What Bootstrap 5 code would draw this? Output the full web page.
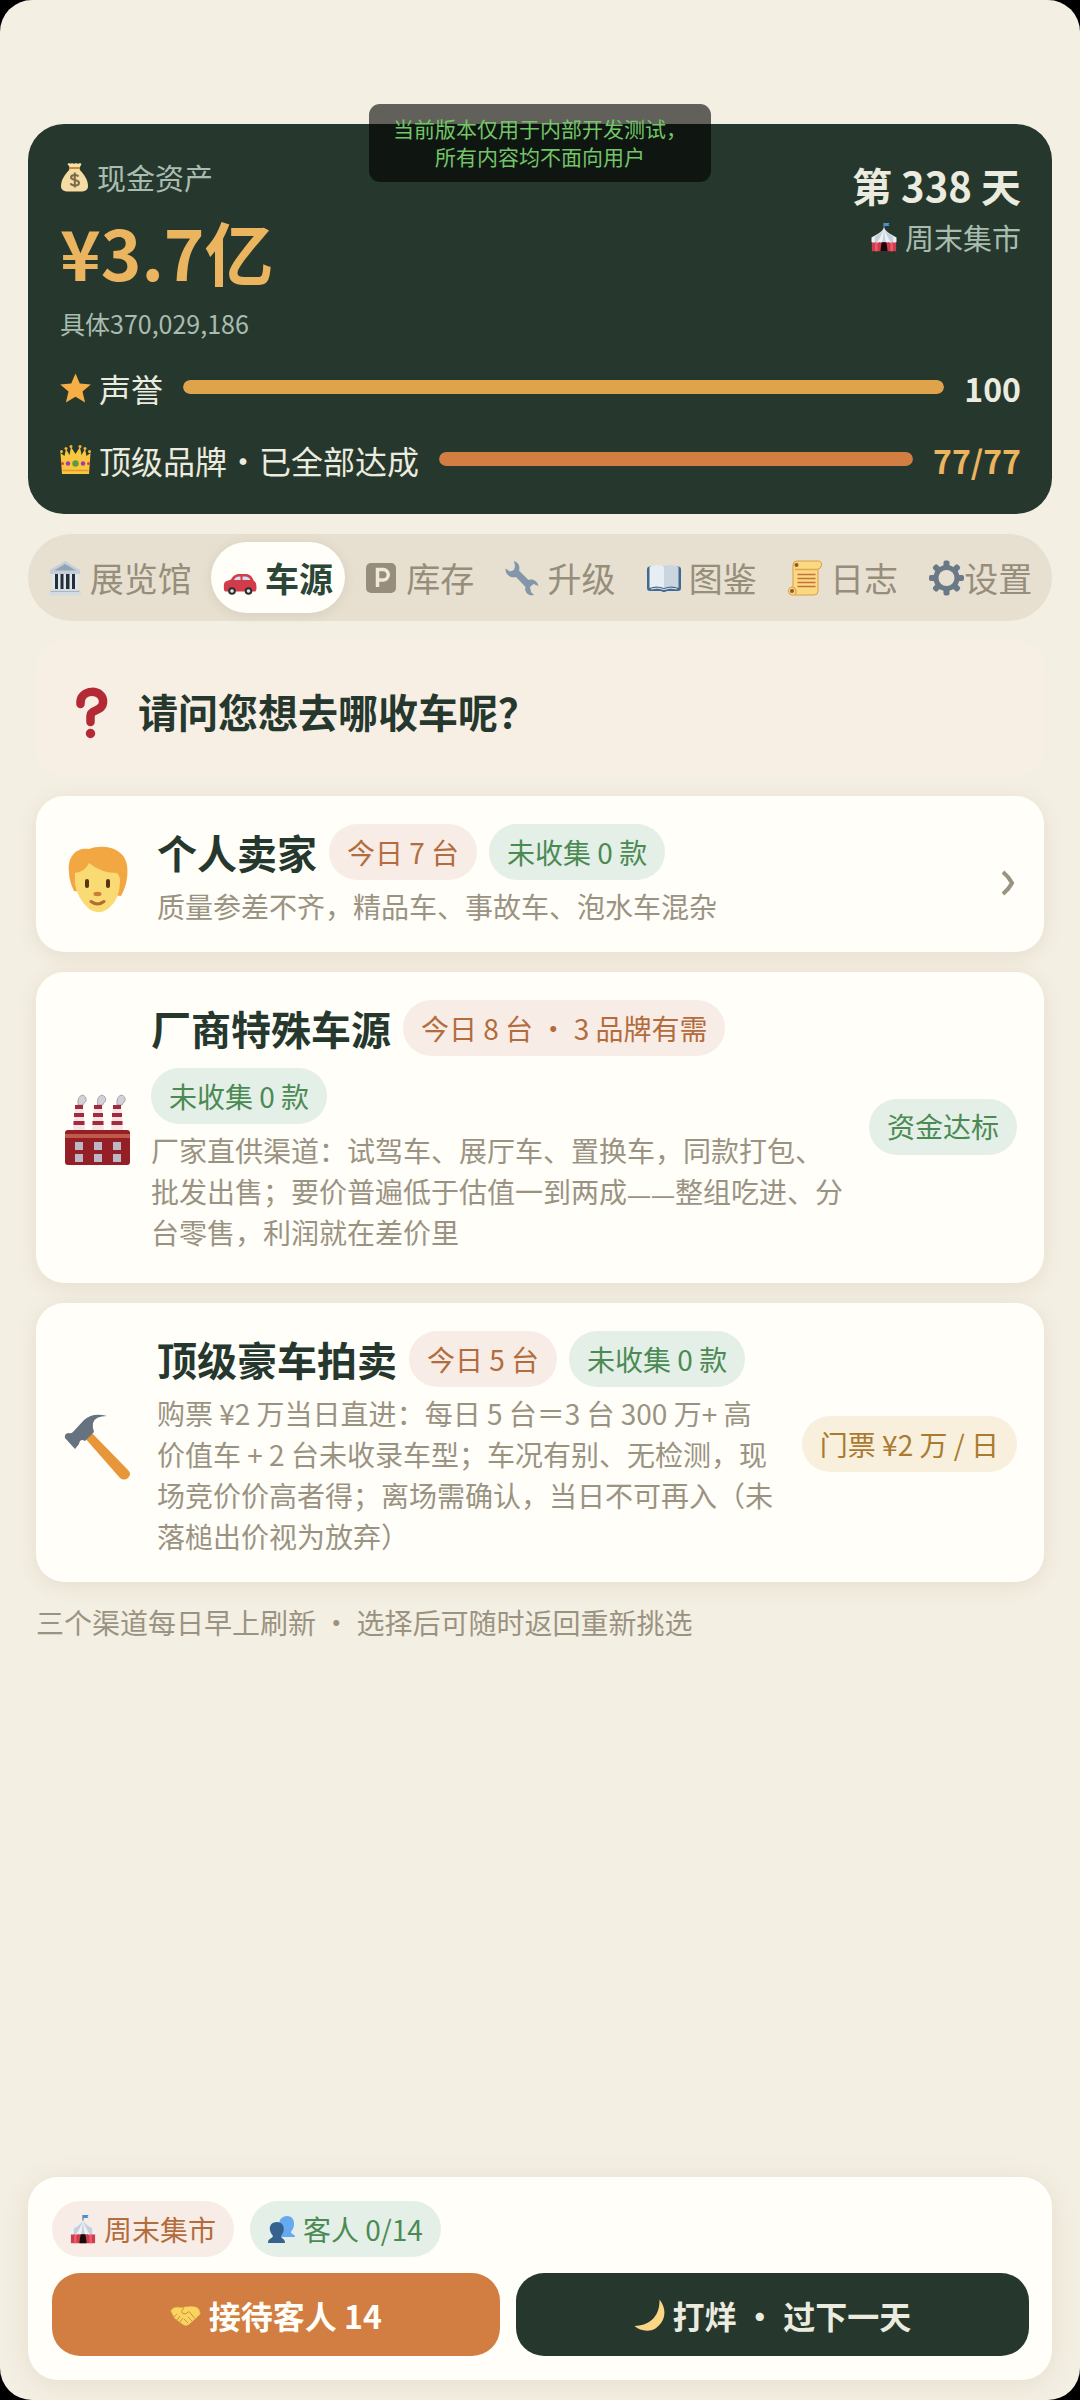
<!DOCTYPE html>
<html lang="zh-CN">
<head>
<meta charset="utf-8">
<meta name="viewport" content="width=device-width, initial-scale=1">
<title>车源</title>
<link href="https://cdn.jsdelivr.net/npm/bootstrap@5.3.0/dist/css/bootstrap.min.css" rel="stylesheet">
<style>
:root{--ink:#26382e;--cream:#f4efe3;--paper:#fffef9;--mute:#9b9382;--gold:#ebb45e;--orange:#d27e43}
body{background:#000;color:var(--ink);font-family:"Noto Sans CJK SC",sans-serif;font-size:28px;line-height:41px}
svg{display:block;flex:none}
.app-screen{background:var(--cream);border-radius:32px;padding:124px 28px 20px;overflow:hidden}
.dev-toast{top:104px;left:50%;transform:translateX(-50%);background:rgba(0,0,0,.6);color:#73c568;border-radius:11px;padding:10px 24px 12px;font-size:21px;line-height:28px;white-space:nowrap;z-index:5}
.summary{background:var(--ink);border-radius:36px;padding:31px 31px 30px 32px;color:#ecebdf}
.soft{color:#a9bcb0;font-size:29px;line-height:44px}
.cash{color:var(--gold);font-size:69px;line-height:88px;font-weight:700;margin-top:8px}
.cash-exact{color:#a9bcb0;font-size:25px;line-height:40px;margin-top:8px}
.day-no{font-size:40px;line-height:60px;font-weight:700}
.stat-row{font-size:32px;line-height:48px;gap:20px}
.stat-first{margin-top:21px}
.stat-row .progress{height:14px;border-radius:7px;background:#3a4b41;margin-top:-2px}
.stat-row .progress-bar{border-radius:7px}
.bar-gold{background:#dfa34c}.bar-orange{background:var(--orange)}
.text-gold{color:var(--gold)}
.tab-strip{background:#e7e0d0;border-radius:44px;padding:8px;gap:8px;margin-top:20px}
.tab-strip .nav-item{flex:1 1 auto}
.tab-strip .nav-link{width:100%;height:71px;padding:0;border-radius:36px;color:#968e7b;font-size:34px;line-height:50px;display:flex;align-items:center;justify-content:center;gap:8px}
.tab-strip .nav-link.active{background:var(--paper);color:#2b4637;font-weight:700;box-shadow:0 2px 12px rgba(60,50,20,.1)}
.tab-strip .tight{gap:0}
.channels{padding:0 8px;margin-top:20px}
.ask{background:#f7eee4;border-radius:28px;padding:40px 26px 35px;font-size:40px;line-height:60px;font-weight:700;gap:16px}
.channel{background:var(--paper);border:0;border-radius:28px;margin-top:20px;padding:28px 27px 25px 28px;gap:24px;box-shadow:0 4px 20px rgba(110,80,40,.1);color:inherit;text-decoration:none}
.channel:hover{color:inherit}
.channel.tall{padding-bottom:30px}
.channel .lead-in{gap:26px}
.channel.tall .lead-in{gap:20px}
.ch-title{font-size:40px;line-height:56px;font-weight:700;margin:0}
.heads{gap:12px}
.desc{color:var(--mute);margin:6px 0 0}
.dash{font-family:"Noto Sans",sans-serif;font-size:24px;line-height:28px}
.chip{display:inline-flex;align-items:center;border-radius:28px;height:56px;padding:0 18px;white-space:nowrap;font-size:28px;gap:8px}
.chip-o{background:#f8ede6;color:#b36c3d}
.chip-g{background:#e4efe7;color:#4c8a54}
.chip-y{background:#f8efdd;color:#aa7a30}
.note{color:var(--mute);margin:20px 0 0}
.dock{background:var(--paper);border-radius:30px;padding:24px 23px 24px 24px;box-shadow:0 4px 28px rgba(110,80,40,.1)}
.dock .btn{flex:1 1 auto;height:83px;border:0;border-radius:28px;font-size:32px;font-weight:700;line-height:48px;display:flex;align-items:center;justify-content:center;gap:8px;padding:0 12px}
.btn-serve,.btn-serve:hover{background:var(--orange);color:#fffef9}
.btn-close-day,.btn-close-day:hover{background:var(--ink);color:#ecebdf}
</style>
</head>
<body>
<svg width="0" height="0" class="position-absolute" aria-hidden="true">
  <symbol id="tent" viewBox="0 0 32 36">
    <path d="M16 0v9" stroke="#6b7f92" stroke-width="1.6"/><path d="M16 0h7l-1.5 1.8L23 3.6h-7z" fill="#4a8fd6"/>
    <path d="M1 23h30v12H1z" fill="#d23b4b"/><path d="M5 23h3v12H5zM24 23h3v12h-3z" fill="#e2606d"/>
    <path d="M16 6C13 12 6 15 .5 18v5.500q2.500 1.500 5 0 2.500 1.500 5 0 2.500 1.500 5.500 0 3 1.500 5.500 0 2.500 1.500 5 0 2.500 1.500 5 0V18C26 15 19 12 16 6z" fill="#eef2f6"/>
    <path d="M16 6c-3 6-7 9-11.500 10.500v7h3.500c3-5 6-10 8-17.500zM16 6c3 6 7 9 11.500 10.500v7H24c-3-5-6-10-8-17.500zM16 8l-2 15.500h4z" fill="#c6d0db"/>
    <path d="M11.500 35l1.500-11h6l1.500 11z" fill="#160a0d"/>
  </symbol>
</svg>

<main class="app-screen position-relative min-vh-100 d-flex flex-column">
  <div class="dev-toast position-absolute text-center" role="status">当前版本仅用于内部开发测试，<br>所有内容均不面向用户</div>

  <header class="summary">
    <div class="d-flex justify-content-between">
      <div>
        <div class="soft d-flex align-items-center gap-2">
          <svg width="29" height="30" viewBox="0 0 29 30"><path d="M9 1q2 1 3 0 2 1.500 4 0 2 1.500 4 0l1.500 1-2.500 5h-8L7.500 2z" fill="#f7dfae"/><path d="M9 5h11v3H9z" fill="#c98a3c"/><path d="M10 7h9c5 5 9 11 9 17 0 4-3 5.500-7 5.500H8C4 29.500 1 28 1 24 1 18 5 12 10 7z" fill="#f4dca4"/><path d="M18.500 14.500c-1-2-7-2.500-7.500.800 0 3.600 8 1.800 8 5.600 0 3.400-7.200 3.200-8.500.500M14.800 10.500v15" fill="none" stroke="#7a6a45" stroke-width="2"/></svg>
          <span>现金资产</span>
        </div>
        <div class="cash">¥3.7亿</div>
        <div class="cash-exact">具体370,029,186</div>
      </div>
      <div class="text-end">
        <div class="day-no">第 338 天</div>
        <div class="soft d-flex align-items-center justify-content-end gap-2"><svg width="26" height="29"><use href="#tent"/></svg><span>周末集市</span></div>
      </div>
    </div>
    <div class="stat-row stat-first d-flex align-items-center">
      <div class="d-flex align-items-center gap-2">
        <svg width="31" height="30" viewBox="0 0 31 30"><path d="M15.500 0.500l4.300 10 11 .900-8.300 7.200 2.600 10.900-9.600-5.800-9.600 5.800 2.600-10.900L.200 11.400l11-.900z" fill="#f6ae45"/></svg>
        <span id="l-rep">声誉</span>
      </div>
      <div class="progress flex-grow-1" role="progressbar" aria-labelledby="l-rep" aria-valuenow="100" aria-valuemin="0" aria-valuemax="100"><div class="progress-bar bar-gold" style="width:100%"></div></div>
      <strong>100</strong>
    </div>
    <div class="stat-row d-flex align-items-center mt-4">
      <div class="d-flex align-items-center gap-2">
        <svg width="31" height="30" viewBox="0 0 31 30"><path d="M2 29L.500 8l4 3 1.500-7 3.500 6L11 2l4.500 7L20 2l1.500 8L25 4l1.500 7 4-3L29 29z" fill="#fac63f"/><g fill="#f7b53a"><circle cx="1.500" cy="6.500" r="1.500"/><circle cx="6" cy="3.500" r="1.500"/><circle cx="11" cy="1.500" r="1.500"/><circle cx="20" cy="1.500" r="1.500"/><circle cx="25" cy="3.500" r="1.500"/><circle cx="29.500" cy="6.500" r="1.500"/></g><circle cx="15.500" cy="18.500" r="3.200" fill="#5f9a3c"/><circle cx="8" cy="18.500" r="2.200" fill="#9b3bb5"/><circle cx="23" cy="18.500" r="2.200" fill="#9b3bb5"/><circle cx="2.500" cy="18.500" r="1.500" fill="#d8433a"/><circle cx="28.500" cy="18.500" r="1.500" fill="#d8433a"/><path d="M2.500 25.500h26" stroke="#e09a28" stroke-width="1.500"/></svg>
        <span id="l-brand">顶级品牌・已全部达成</span>
      </div>
      <div class="progress flex-grow-1" role="progressbar" aria-labelledby="l-brand" aria-valuenow="77" aria-valuemin="0" aria-valuemax="77"><div class="progress-bar bar-orange" style="width:100%"></div></div>
      <strong class="text-gold">77/77</strong>
    </div>
  </header>

  <nav aria-label="主导航">
    <ul class="nav nav-pills flex-nowrap tab-strip">
      <li class="nav-item"><button type="button" class="nav-link">
        <svg width="34" height="36" viewBox="0 0 34 36"><path d="M17 1L2 10v4h30v-4z" fill="#c3ced9"/><path d="M17 4L6 10.500h22z" fill="#93a3b3"/><path d="M4 14h26v15H4z" fill="#dfe6ec"/><path d="M7 14h3v15H7zM12.500 14h3v15h-3zM18 14h3.500v15H18zM24 14h3v15h-3z" fill="#252f3a"/><path d="M2.500 29h29v3h-29zM1 32h32v3.500H1z" fill="#d3dbe3"/><path d="M2.500 31.500h29" stroke="#a9b6c2"/></svg>展览馆</button></li>
      <li class="nav-item"><button type="button" class="nav-link active" aria-current="page">
        <svg width="34" height="36" viewBox="0 0 34 36"><path d="M1 30c-.500-5 0-7.500 1.500-8.500l5.500-2c2-4 5-5.500 9-5.500h5c5 0 7 2.500 9 7 2 1 2.500 3 2.500 8l-1 2.500H2z" fill="#d13b4a"/><path d="M11 20c1.500-3 3-3.500 6.500-3.500V20zM19.500 16.500H22c3 0 4.500 1.500 5.500 3.500h-8z" fill="#cfe0ee"/><circle cx="9" cy="31" r="3.800" fill="#28302f"/><circle cx="25.500" cy="31" r="3.800" fill="#28302f"/><circle cx="9" cy="31" r="1.800" fill="#e3e7ea"/><circle cx="25.500" cy="31" r="1.800" fill="#e3e7ea"/></svg>车源</button></li>
      <li class="nav-item"><button type="button" class="nav-link">
        <svg width="34" height="36" viewBox="0 0 34 36"><rect x="2" y="3" width="30" height="30" rx="5" fill="#968e7b"/><path d="M13.500 27V9.500h5.500a5 5 0 0 1 0 10.500h-5.500" fill="none" stroke="#efe9dc" stroke-width="3.500"/></svg>库存</button></li>
      <li class="nav-item"><button type="button" class="nav-link">
        <svg width="34" height="36" viewBox="0 0 34 36"><path d="M9 1c4 1 6.500 5 5 9.500L23.500 20c4.500-1.500 9 1 10 6l-5-2-3.500 3 1 5 3 3c-5 1.500-10-2.500-8.500-8L11 17C6 18.500 0 15 .500 8.500l4.500 3 4-1.500 1-4z" fill="#8497aa"/></svg>升级</button></li>
      <li class="nav-item"><button type="button" class="nav-link">
        <svg width="34" height="36" viewBox="0 0 34 36"><path d="M3 6.500h28q3 0 3 3V28q0 3-3 3H20q-3 2-6 0H3q-3 0-3-3V9.500q0-3 3-3z" fill="#41688f"/><path d="M2.500 7q7-3.500 14.500-.500v21.500q-7.500-3-14.500 0z" fill="#e6edf3"/><path d="M31.500 7Q24.500 3.500 17 6.500V28q7.500-3 14.500 0z" fill="#cad5df"/><path d="M4 29q7-2 13 .500 6-2.500 13-.500" fill="none" stroke="#dfe8f0" stroke-width="1"/></svg>图鉴</button></li>
      <li class="nav-item"><button type="button" class="nav-link">
        <svg width="34" height="36" viewBox="0 0 34 36"><path d="M9 1h21q4 0 3.500 4-.500 4-3.500 4v22q0 4-4 4H4q-3.500 0-3.500-4T5 27V5q0-4 4-4z" fill="#fbd983" stroke="#d7a047"/><path d="M7 9.500h23M5 27.500q4 1 2.500 7" fill="none" stroke="#e1a84e" stroke-width="1.500"/><circle cx="8.500" cy="5" r="2" fill="#8a5a2a"/><circle cx="4" cy="31" r="2" fill="#8a5a2a"/><path d="M9.500 14.500h18M9.500 18.500h18M9.500 22.500h18M9.500 26.500h18" stroke="#c2723a" stroke-width="1.700"/></svg>日志</button></li>
      <li class="nav-item"><button type="button" class="nav-link tight">
        <svg width="35" height="36" viewBox="-17.500 -18 35 36"><g fill="#697985"><rect x="-3" y="-17.500" width="6" height="35" rx="2"/><rect x="-3" y="-17.500" width="6" height="35" rx="2" transform="rotate(45)"/><rect x="-3" y="-17.500" width="6" height="35" rx="2" transform="rotate(90)"/><rect x="-3" y="-17.500" width="6" height="35" rx="2" transform="rotate(135)"/><circle r="13"/></g><circle r="8" fill="#e7e0d0"/></svg>设置</button></li>
    </ul>
  </nav>

  <section class="channels">
    <div class="ask d-flex align-items-center">
      <svg width="60" height="56" viewBox="0 -4 60 56"><path d="M18.500 17C17 1 42.500 1 41 16c-1 9-12.500 6-12.500 13v6" fill="none" stroke="#b32a35" stroke-width="8.500" stroke-linecap="round"/><circle cx="28.500" cy="46.500" r="4.700" fill="#b32a35"/></svg>
      <span>请问您想去哪收车呢？</span>
    </div>

    <a href="#personal" class="channel d-flex flex-row align-items-center">
      <div class="lead-in d-flex align-items-center flex-grow-1">
        <svg width="67" height="74" viewBox="0 -6 67 74"><path d="M5 27C3 10 14 2 25 4 38-1 60 2 63 20c2 14-3 26-6 31L10 46Q5 36 5 27z" fill="#f3a743"/><path d="M11 28q10-1 14-10 12 10 28 10 3 3 3 8 0 18-11 27-10 8-20 1Q13 53 11 39z" fill="#fadb73"/><path d="M45 23q6 1 8 6l-1-6z" fill="#f3a743"/><rect x="21" y="34" width="4" height="9" rx="2" fill="#5b3115"/><rect x="42" y="34" width="4" height="9" rx="2" fill="#5b3115"/><ellipse cx="33.500" cy="49" rx="4" ry="2.200" fill="#c87f3b"/><path d="M27 56.500q6.500 5 13 0" fill="none" stroke="#b56a31" stroke-width="3" stroke-linecap="round"/></svg>
        <div>
          <div class="heads d-flex flex-wrap align-items-center"><h2 class="ch-title">个人卖家</h2><span class="chip chip-o">今日 7 台</span><span class="chip chip-g">未收集 0 款</span></div>
          <p class="desc">质量参差不齐，精品车、事故车、泡水车混杂</p>
        </div>
      </div>
      <svg width="18" height="42" viewBox="0 -14 18 42"><path d="M4 3q6 5 9 11-3 6-9 11" fill="none" stroke="#9b9382" stroke-width="4"/></svg>
    </a>

    <a href="#factory" class="channel tall d-flex flex-row align-items-center">
      <div class="lead-in d-flex align-items-center flex-grow-1">
        <svg width="67" height="80" viewBox="0 -6 67 80"><g fill="#d3d1d8" stroke="#8f8c97" stroke-width=".7"><path d="M14 12q-1-8 4-10 5 1 4 6-2 2-3 4zM33.500 12q-1-8 4-10 5 1 4 6-2 2-3 4zM53 12q-1-8 4-10 5 1 4 6-2 2-3 4z"/></g><g fill="#f6e3e3"><path d="M11 12h8l2 26H9zM30 12h8l2 26H28zM49 12h8l2 26H47z"/></g><path d="M11 12h8v4h-8zM10 20h10v4H10zM9.500 28h11v4h-11zM30 12h8v4h-8zM29 20h10v4H29zM28.500 28h11v4h-11zM49 12h8v4h-8zM48 20h10v4H48zM47.500 28h11v4h-11z" fill="#a02b3f"/><rect x="1" y="37" width="65" height="35" rx="3" fill="#941f27"/><path d="M1 41h65v4H1z" fill="#c05a4b"/><path d="M11 49h8v8h-8zM30 49h8v8h-8zM49 49h8v8h-8zM11 61h8v8h-8zM30 61h8v8h-8zM49 61h8v8h-8z" fill="#bdb8c6"/></svg>
        <div>
          <div class="heads d-flex flex-wrap align-items-center"><h2 class="ch-title">厂商特殊车源</h2><span class="chip chip-o">今日 8 台 ・ 3 品牌有需</span><span class="chip chip-g">未收集 0 款</span></div>
          <p class="desc"><span class="d-block">厂家直供渠道：试驾车、展厅车、置换车，同款打包、</span><span class="d-block">批发出售；要价普遍低于估值一到两成<span class="dash">——</span>整组吃进、分</span><span class="d-block">台零售，利润就在差价里</span></p>
        </div>
      </div>
      <span class="chip chip-g">资金达标</span>
    </a>

    <a href="#auction" class="channel d-flex flex-row align-items-center">
      <div class="lead-in d-flex align-items-center flex-grow-1">
        <svg width="67" height="74" viewBox="0 -6 67 74"><path d="M20 24l6-6 38 39q4 4 0 8-4 3-8 0z" fill="#e8963a"/><path d="M1 25q-1-4 3-5 3 1 5-1L20 7Q29-1 43 3q-12 0-14 7-1 4 1 9l-9 9q-5-3-6 3l-4 5z" fill="#66727f"/></svg>
        <div>
          <div class="heads d-flex flex-wrap align-items-center"><h2 class="ch-title">顶级豪车拍卖</h2><span class="chip chip-o">今日 5 台</span><span class="chip chip-g">未收集 0 款</span></div>
          <p class="desc">购票 ¥2 万当日直进：每日 5 台＝3 台 300 万+ 高价值车 + 2 台未收录车型；车况有别、无检测，现场竞价价高者得；离场需确认，当日不可再入（未落槌出价视为放弃）</p>
        </div>
      </div>
      <span class="chip chip-y">门票 ¥2 万 / 日</span>
    </a>
    <p class="note">三个渠道每日早上刷新 ・ 选择后可随时返回重新挑选</p>
  </section>

  <footer class="dock mt-auto">
    <div class="d-flex gap-3 mb-3">
      <span class="chip chip-o"><svg width="26" height="29"><use href="#tent"/></svg>周末集市</span>
      <span class="chip chip-g"><svg width="27" height="28" viewBox="0 0 27 28"><path d="M11 22c0-3 3-3 4-4-6-6-5-17 4-17 8 0 9 10 4 16 0 2 4 2 4 5z" fill="#66a9f0"/><path d="M0 28c0-5 4-4 5-7-6-7-3-14 4-14s9 8 4 14c0 3 4 2 4 7z" fill="#35628f"/></svg>客人 0/14</span>
    </div>
    <div class="d-flex gap-3">
      <button type="button" class="btn btn-serve"><svg width="31" height="30" viewBox="0 0 31 30"><path d="M.500 11q3-5 8-4 4 1 7-.500 7-1 11 .500 4 2 4 7l-5 5-7 6q-3 2-6-.500l-8-6z" fill="#fbd35f" stroke="#c9913a" stroke-width=".6"/><path d="M14 8q-4 4-1 5.500t6-2l6 7M18 17l4 4M14 19l4 4M4 17l3-3M7 20l3-4M10 22l3-4" fill="none" stroke="#c9913a" stroke-width="1"/></svg>接待客人 14</button>
      <button type="button" class="btn btn-close-day"><svg width="31" height="32" viewBox="0 0 31 32"><path d="M25.500.500c8 10 6 22-4 29-7 4-16 2-21-2.500C14 27 26 19 25.500.500z" fill="#fbd685"/></svg>打烊 ・ 过下一天</button>
    </div>
  </footer>
</main>
<script src="https://cdn.jsdelivr.net/npm/bootstrap@5.3.0/dist/js/bootstrap.bundle.min.js"></script>
</body>
</html>
